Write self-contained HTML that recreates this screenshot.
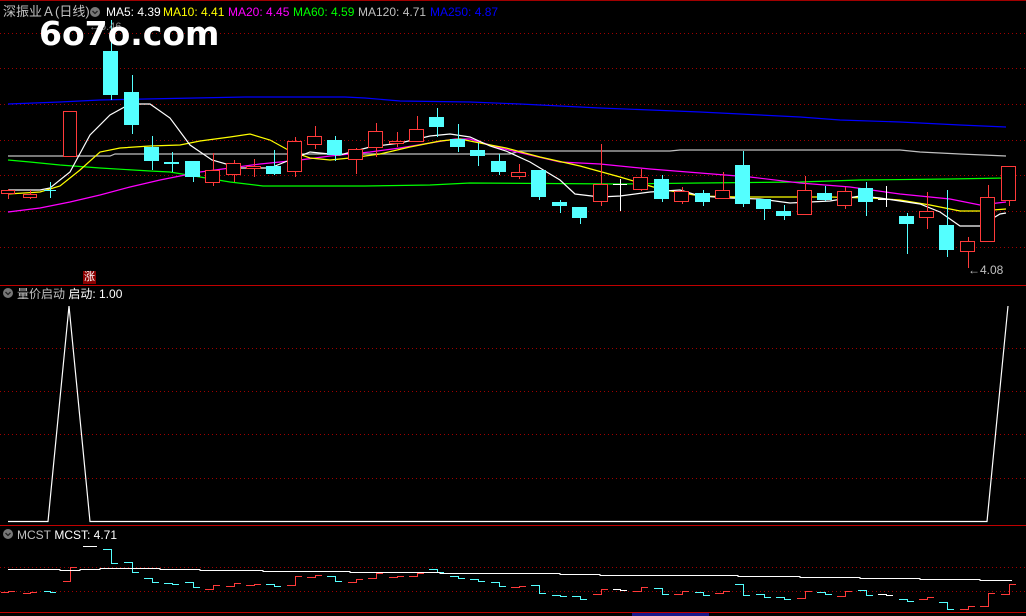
<!DOCTYPE html>
<html><head><meta charset="utf-8"><style>
body{margin:0;background:#000;width:1026px;height:616px;overflow:hidden;position:relative;font-family:"Liberation Sans","Noto Sans CJK SC",sans-serif}
.t{position:absolute;font-size:12px;white-space:nowrap;line-height:14px}
svg{position:absolute;left:0;top:0}
</style></head><body>
<svg id="s" width="1026" height="616" xmlns="http://www.w3.org/2000/svg"></svg>
<div class="t" style="left:3px;top:5px;color:#c0c0c0;font-size:13px">深振业Ａ(日线)</div>
<div class="t" style="left:106px;top:5px;color:#fff">MA5: 4.39</div>
<div class="t" style="left:163px;top:5px;color:#ff0">MA10: 4.41</div>
<div class="t" style="left:228px;top:5px;color:#f0f">MA20: 4.45</div>
<div class="t" style="left:293px;top:5px;color:#0f0">MA60: 4.59</div>
<div class="t" style="left:358px;top:5px;color:#c0c0c0">MA120: 4.71</div>
<div class="t" style="left:430px;top:5px;color:#00f">MA250: 4.87</div>
<div class="t" style="left:39px;top:14px;color:#fff;font-family:'DejaVu Sans',sans-serif;font-size:33px;line-height:40px;font-weight:bold">6o7o.com</div>
<div class="t" style="left:968px;top:263px;color:#c0c0c0">←4.08</div>
<div class="t" style="left:83px;top:271px;width:13px;height:13px;background:#8b0000;color:#fff;font-size:11px;line-height:13px;text-align:center">涨</div>
<div class="t" style="left:17px;top:287px;color:#c0c0c0;font-size:12px">量价启动&nbsp;<span style="color:#fff">启动: 1.00</span></div>
<div class="t" style="left:17px;top:528px;color:#c0c0c0">MCST&nbsp;<span style="color:#fff">MCST: 4.71</span></div>
<script>
var s=document.getElementById('s'),h='';
function Rc(x,y,w,hh,c){if(w<0){x+=w;w=-w}if(hh<0){y+=hh;hh=-hh}h+='<rect x="'+x+'" y="'+y+'" width="'+Math.max(1,w)+'" height="'+Math.max(1,hh)+'" fill="'+c+'"/>';}
function D(y){h+='<line x1="0" y1="'+(y+.5)+'" x2="1026" y2="'+(y+.5)+'" stroke="#a00000" stroke-width="1" stroke-dasharray="1,3"/>';}
function P(pts,c){h+='<polyline fill="none" stroke="'+c+'" stroke-width="1.2" points="'+pts.map(function(p){return p.join(',')}).join(' ')+'"/>';}
Rc(0,0,1026,1,'#a00000');
[33,68,104,140,175,211,247,348,391,434,478,567,591].forEach(D);
Rc(0,285,1026,1,'#c00000');Rc(0,525,1026,1,'#c00000');Rc(0,612,1026,1,'#c00000');
[[95,12],[8,293],[8,534]].forEach(function(p){h+='<circle cx="'+p[0]+'" cy="'+p[1]+'" r="5" fill="#777"/><polyline points="'+(p[0]-2.5)+','+(p[1]-1)+' '+p[0]+','+(p[1]+1.5)+' '+(p[0]+2.5)+','+(p[1]-1)+'" fill="none" stroke="#222" stroke-width="1.3"/>'});
var R='#ff3a3a',C='#54ffff',W='#ffffff';
var k=[[1,15,190,193,189,199,R],[23,37,194,197,190,199,R],[44,56,190,191,182,198,C],[63,77,111,156,111,156,R],[103,118,51,95,20,100,C],[124,139,92,125,75,134,C],[144,159,147,161,136,170,C],[164,179,162,164,152,172,C],[185,200,161,177,161,182,C],[205,220,170,182,153,186,R],[226,241,163,174,160,182,R],[246,261,166,168,159,177,R],[266,281,166,174,150,175,C],[287,302,141,171,137,177,R],[307,322,136,144,126,149,R],[327,342,140,155,136,161,C],[348,363,149,159,148,174,R],[368,383,131,147,123,157,R],[389,404,141,143,132,147,R],[409,424,129,141,116,141,R],[429,444,117,127,108,137,C],[450,465,139,147,124,152,C],[470,485,150,156,143,166,C],[491,506,161,172,154,175,C],[511,526,172,176,164,179,R],[531,546,170,197,170,200,C],[552,567,202,206,200,213,C],[572,587,207,218,207,224,C],[593,608,184,201,144,206,R],[613,627,184,185,179,211,W],[633,648,177,189,169,191,R],[654,669,179,199,175,202,C],[674,689,191,201,187,204,R],[695,710,193,202,190,206,C],[715,730,190,198,172,199,R],[735,750,165,204,151,207,C],[756,771,199,209,199,220,C],[776,791,211,216,205,220,C],[797,812,190,214,176,215,R],[817,832,193,200,186,200,C],[837,852,191,205,187,209,R],[858,873,188,202,182,216,C],[878,893,199,200,186,207,W],[899,914,216,224,213,254,C],[919,934,211,217,192,229,R],[939,954,225,250,190,257,C],[960,975,241,251,237,268,R],[980,995,197,241,185,241,R],[1001,1016,166,200,166,206,R]];
P([[8,104],[60,102],[100,100],[145,99],[245,97],[345,97],[365,98],[400,101],[470,102],[520,104],[600,108],[700,112],[800,117],[840,120],[900,122],[960,125],[1006,127]],'#0000ff');
P([[8,156],[110,156],[115,154],[510,154],[520,151],[670,151],[680,150],[900,150],[920,152],[960,154],[1006,156]],'#c0c0c0');
P([[8,160],[30,162],[60,165],[100,168],[150,171],[170,172],[200,177],[230,182],[263,186],[365,186],[430,185],[470,183],[620,184],[700,183],[800,182],[860,180],[950,179],[1006,178]],'#00ff00');
P([[8,212],[40,208],[70,202],[100,195],[130,187],[160,180],[200,172],[230,168],[260,164],[300,160],[330,156],[370,152],[400,148],[430,143],[455,139],[470,139],[500,148],[530,155],[560,162],[600,164],[650,169],[700,173],[750,177],[800,183],[850,187],[900,194],[950,199],[980,205],[1006,202]],'#ff00ff');
P([[8,194],[40,192],[60,186],[80,170],[100,152],[120,148],[150,146],[180,145],[200,141],[230,137],[250,134],[270,140],[290,151],[310,158],[330,160],[350,158],[380,154],[410,147],[440,141],[460,139],[480,143],[506,148],[540,157],[580,166],[620,177],[660,189],[700,196],[740,197],[830,197],[870,198],[900,200],[930,205],[960,211],[980,211],[1006,209]],'#ffff00');
P([[8,190],[40,190],[50,188],[70,172],[90,135],[110,115],[130,104],[150,104],[170,118],[190,145],[212,160],[240,168],[270,168],[290,160],[310,152],[340,155],[370,147],[400,143],[430,136],[450,134],[470,137],[490,146],[506,151],[530,162],[560,180],[575,194],[600,197],[620,196],[650,192],[680,190],[700,196],[730,198],[760,199],[790,203],[830,201],[860,196],[880,198],[920,204],[940,212],[960,226],[980,226],[1000,214],[1006,213]],'#ffffff');
k.forEach(function(c){var col=c[6],m=Math.round((c[0]+c[1])/2),w=c[1]-c[0];
 Rc(m,c[4],1,c[2]-c[4],col);Rc(m,c[3],1,c[5]-c[3],col);
 if(col==C){Rc(c[0],c[2],w,c[3]-c[2],C);}
 else if(col==W){Rc(c[0],c[2],w,1,W);}
 else{Rc(c[0],c[2],w,Math.max(2,c[3]-c[2]),'#000');
  Rc(c[0],c[2],1,c[3]-c[2]+1,col);Rc(c[1]-1,c[2],1,c[3]-c[2]+1,col);Rc(c[0],c[2],w,1,col);Rc(c[0],c[3],w,1,col);}
 var f=function(y){return Math.round(591+(y-190)*0.3)};
 var top=f(c[2]),bot=f(c[3]);if(bot-top<1)bot=top+1;
 Rc(m,top,1,bot-top+1,col);
 if(col==R){Rc(c[0],bot,m-c[0],1,col);Rc(m,top,c[1]-m,1,col);}
 else{Rc(c[0],top,m-c[0],1,col);Rc(m,bot,c[1]-m,1,col);}
});
P([[8,521.5],[48,521.5],[69,306],[90,521.5],[987,521.5],[1008,306]],'#fff');
h+='<polyline fill="none" stroke="#fff" stroke-width="1" points="8,569.5 60,569.5 60,570.5 80,570.5 80,569.5 100,569.5 100,568.5 160,568.5 160,569.5 200,569.5 200,570.5 263,570.5 263,571.5 350,571.5 350,572.5 440,572.5 440,573.5 560,573.5 560,574.5 600,574.5 600,575.5 738,575.5 738,576.5 800,576.5 800,577.5 860,577.5 860,578.5 920,578.5 920,579.5 980,579.5 980,580.5 1012,580.5"/>';
Rc(83,546,14,1,'#fff');
Rc(632,613,77,3,'#1a1a8a');
h+='<text x="89" y="30" fill="#888" font-size="11" font-family="Liberation Sans">←5.46</text>';
s.innerHTML=h;
</script>
</body></html>
